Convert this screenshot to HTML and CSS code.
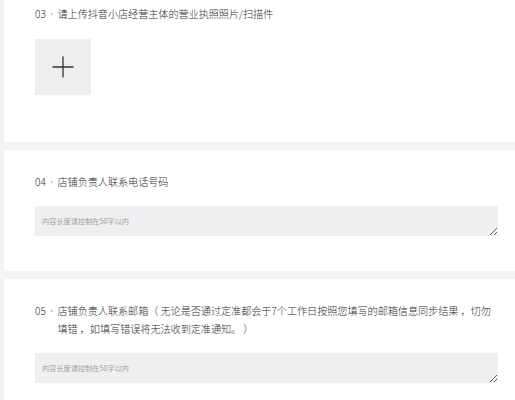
FILE: index.html
```html
<!DOCTYPE html>
<html lang="zh-CN">
<head>
<meta charset="utf-8">
<link rel="stylesheet" href="styles.css">
</head>
<body>
<section class="card card-first">
  <div class="q-title"><span class="q-num">03</span><span class="q-req">*</span><span class="q-text">请上传抖音小店经营主体的营业执照照片/扫描件</span></div>
  <div class="upload">
    <svg width="22" height="22" viewBox="0 0 22 22"><path d="M11 0.5V21.5M0.5 11H21.5" stroke="#333" stroke-width="1.3" fill="none"/></svg>
  </div>
</section>
<section class="card">
  <div class="q-title"><span class="q-num">04</span><span class="q-req">*</span><span class="q-text">店铺负责人联系电话号码</span></div>
  <textarea class="answer" placeholder="内容长度请控制在50字以内"></textarea>
</section>
<section class="card">
  <div class="q-title"><span class="q-num">05</span><span class="q-req">*</span><span class="q-text">店铺负责人联系邮箱（ 无论是否通过定准都会于7个工作日按照您填写的邮箱信息同步结果 ，切勿填错 ，如填写错误将无法收到定准通知。 ）</span></div>
  <textarea class="answer" placeholder="内容长度请控制在50字以内"></textarea>
</section>
</body>
</html>
```
FILE: styles.css
```css
html, body {
  margin: 0;
  padding: 0;
}
body {
  background: #f3f3f4;
  padding-left: 4px;
  font-family: "Noto Sans CJK SC", "Noto Sans", sans-serif;
  font-weight: 300;
  color: #2e2e2e;
  overflow: hidden;
}
.card {
  background: #fff;
  padding: 23px 17px 35px 31px;
  margin-bottom: 8px;
}
.card-first {
  padding-top: 5px;
  padding-bottom: 47px;
}
.q-title {
  display: flex;
  align-items: flex-start;
  font-size: 10.2px;
  line-height: 18px;
}
.q-num {
  flex: none;
}
.q-req {
  flex: none;
  color: #e8727a;
  font-size: 8px;
  line-height: 15px;
  margin: 3px 4px 0 4px;
}
.q-text {
  flex: 1;
  letter-spacing: -0.1px;
}
.upload {
  margin-top: 16px;
  width: 56px;
  height: 56px;
  background: #eeeef0;
  display: flex;
  align-items: center;
  justify-content: center;
}
.answer {
  display: block;
  box-sizing: border-box;
  width: 100%;
  height: 30px;
  margin: 15px 0 0 0;
  border: none;
  outline: none;
  background: #efeff1;
  padding: 11px 7px 4px;
  font-family: "Noto Sans CJK SC", "Noto Sans", sans-serif;
  font-size: 7.2px;
  line-height: 8px;
  resize: vertical;
}
.answer::placeholder {
  color: #a0a0a0;
}
```
